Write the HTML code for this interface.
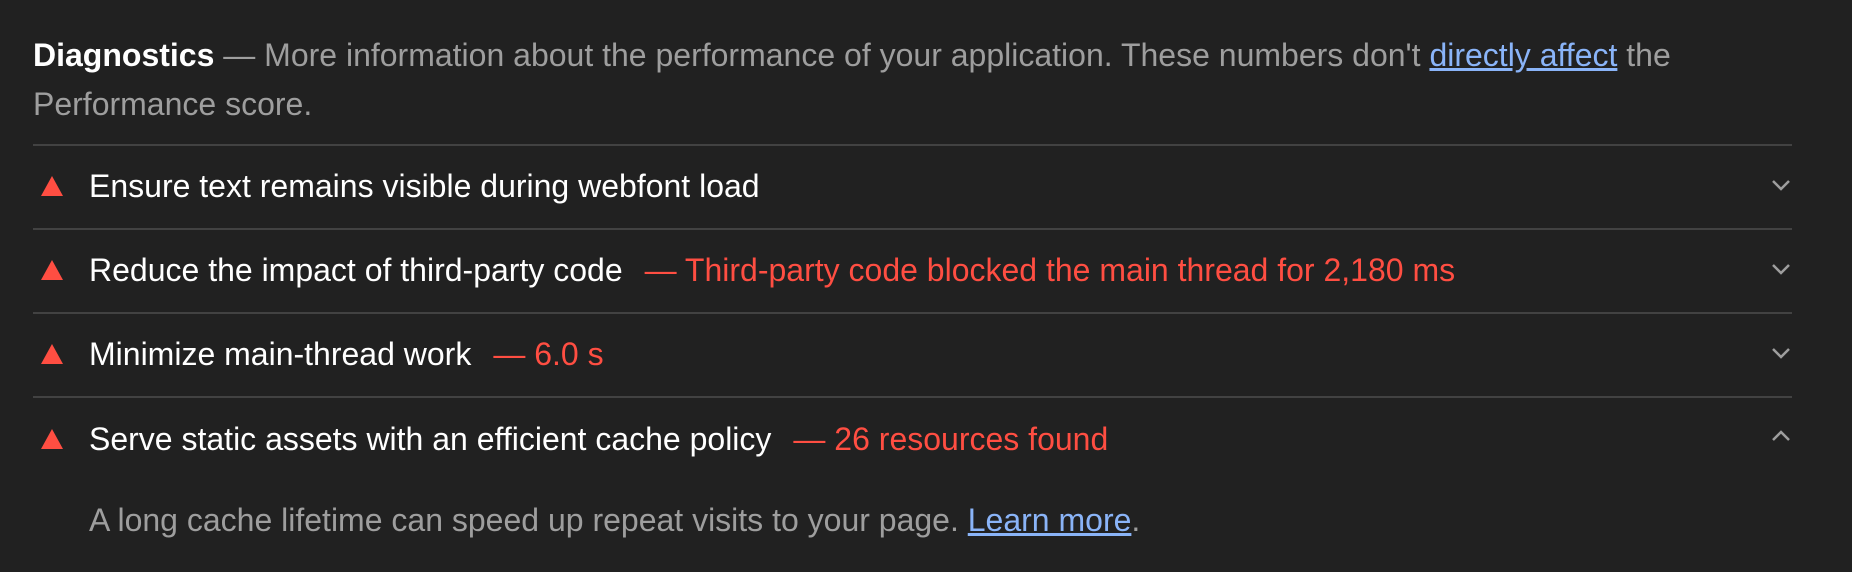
<!DOCTYPE html>
<html><head><style>
body{margin:0;background:#212121;width:1852px;height:572px;overflow:hidden;font-family:"Liberation Sans",Arial,sans-serif;}
.hdr{position:absolute;top:31px;left:33px;width:1720px;font-size:32px;line-height:49px;color:#9e9e9e;}
.hdr b{color:#fff;}
a{color:#8ab4f8;text-decoration:underline;}
.line{position:absolute;left:33px;width:1759px;height:2px;background:#424242;}
.row{position:absolute;left:33px;width:1759px;height:40px;font-size:32px;line-height:40px;color:#fff;}
.tri{position:absolute;left:8px;top:10px;width:0;height:0;border-left:11px solid transparent;border-right:11px solid transparent;border-bottom:20px solid #ff4e42;}
.t{position:absolute;left:56px;white-space:nowrap;}
.r{color:#ff4e42;margin-left:22px;}
.chev{position:absolute;left:1738px;top:12px;}
.desc{position:absolute;left:89px;top:500px;font-size:32px;line-height:40px;color:#9e9e9e;white-space:nowrap;}
</style></head><body>
<div class="hdr"><b>Diagnostics</b> — More information about the performance of your application. These numbers don't <a>directly affect</a> the Performance score.</div>
<div class="line" style="top:144px"></div>
<div class="row" style="top:166px"><div class="tri"></div><div class="t">Ensure text remains visible during webfont load</div>
<svg class="chev" width="20" height="14" viewBox="0 0 20 14"><path d="M2 3l8 8 8-8" fill="none" stroke="#9e9e9e" stroke-width="2.5"/></svg></div>
<div class="line" style="top:228px"></div>
<div class="row" style="top:250px"><div class="tri"></div><div class="t">Reduce the impact of third-party code<span class="r">— Third-party code blocked the main thread for 2,180 ms</span></div>
<svg class="chev" width="20" height="14" viewBox="0 0 20 14"><path d="M2 3l8 8 8-8" fill="none" stroke="#9e9e9e" stroke-width="2.5"/></svg></div>
<div class="line" style="top:312px"></div>
<div class="row" style="top:334px"><div class="tri"></div><div class="t">Minimize main-thread work<span class="r">— 6.0 s</span></div>
<svg class="chev" width="20" height="14" viewBox="0 0 20 14"><path d="M2 3l8 8 8-8" fill="none" stroke="#9e9e9e" stroke-width="2.5"/></svg></div>
<div class="line" style="top:396px"></div>
<div class="row" style="top:419px"><div class="tri"></div><div class="t">Serve static assets with an efficient cache policy<span class="r">— 26 resources found</span></div>
<svg class="chev" width="20" height="14" viewBox="0 0 20 14" style="top:10px"><path d="M2 11l8-8 8 8" fill="none" stroke="#9e9e9e" stroke-width="2.5"/></svg></div>
<div class="desc">A long cache lifetime can speed up repeat visits to your page. <a>Learn more</a>.</div>
</body></html>
